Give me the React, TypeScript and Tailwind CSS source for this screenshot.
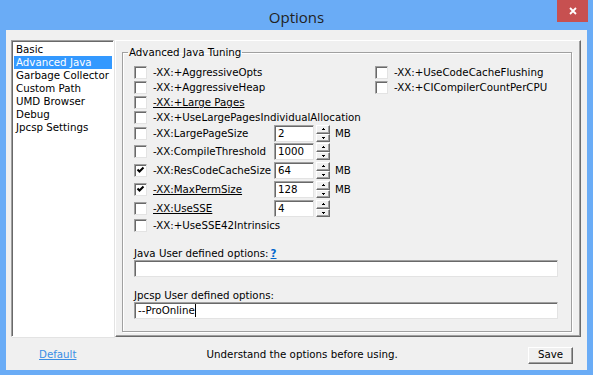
import React from 'react';

const sunken =
  'border border-t-[#a0a0a0] border-l-[#a0a0a0] border-b-[#e3e3e3] border-r-[#e3e3e3] shadow-[inset_1px_1px_0_#696969]';
const raised =
  'border border-t-white border-l-white border-b-[#696969] border-r-[#696969] shadow-[inset_-1px_-1px_0_#a0a0a0]';

function Check({ checked }: { checked?: boolean }) {
  return (
    <span className={`w-[13px] h-[13px] shrink-0 bg-white flex items-center justify-center ${sunken}`}>
      {checked && (
        <svg width="9" height="9" viewBox="0 0 9 9">
          <path d="M1.5 3.5 L3.5 5.5 L7.5 1.5" stroke="#000" strokeWidth="2" fill="none" />
        </svg>
      )}
    </span>
  );
}

function SpinBtn({ up }: { up?: boolean }) {
  return (
    <div className={`flex-1 w-[14px] bg-[#f0f0f0] flex items-center justify-center ${raised}`}>
      <svg width="3" height="2" viewBox="0 0 3 2">
        <path d={up ? 'M1 0h1v1h1v1H0V1h1z' : 'M0 0h3v1H2v1H1V1H0z'} fill="#000" />
      </svg>
    </div>
  );
}

function Spinner({ value, unit }: { value: string; unit?: string }) {
  return (
    <div className="flex items-center">
      <div className={`w-[40px] h-[17px] bg-white pl-[3px] leading-[15px] ${sunken}`}>{value}</div>
      <div className="ml-[2px] h-[17px] flex flex-col">
        <SpinBtn up />
        <SpinBtn />
      </div>
      {unit && <span className="ml-[5px]">{unit}</span>}
    </div>
  );
}

type Opt = { label: string; checked?: boolean; underline?: boolean; spin?: string; unit?: string; h: string };

const leftOpts: Opt[] = [
  { label: '-XX:+AggressiveOpts', h: 'h-[15px]' },
  { label: '-XX:+AggressiveHeap', h: 'h-[15px]' },
  { label: '-XX:+Large Pages', underline: true, h: 'h-[15px]' },
  { label: '-XX:+UseLargePagesIndividualAllocation', h: 'h-[15px]' },
  { label: '-XX:LargePageSize', spin: '2', unit: 'MB', h: 'h-[17px]' },
  { label: '-XX:CompileThreshold', spin: '1000', h: 'h-[19px]' },
  { label: '-XX:ResCodeCacheSize', checked: true, spin: '64', unit: 'MB', h: 'h-[19px]' },
  { label: '-XX:MaxPermSize', checked: true, underline: true, spin: '128', unit: 'MB', h: 'h-[19px]' },
  { label: '-XX:UseSSE', underline: true, spin: '4', h: 'h-[19px]' },
  { label: '-XX:+UseSSE42Intrinsics', h: 'h-[15px]' },
];

const rightOpts: Opt[] = [
  { label: '-XX:+UseCodeCacheFlushing', h: 'h-[15px]' },
  { label: '-XX:+CICompilerCountPerCPU', h: 'h-[15px]' },
];

function OptRow({ o }: { o: Opt }) {
  return (
    <div className={`flex items-center ${o.h}`}>
      <Check checked={o.checked} />
      <span className={`ml-[6px] whitespace-nowrap ${o.spin ? 'w-[121px]' : ''} ${o.underline ? 'underline' : ''}`}>
        {o.label}
      </span>
      {o.spin && <Spinner value={o.spin} unit={o.unit} />}
    </div>
  );
}

const sections = ['Basic', 'Advanced Java', 'Garbage Collector', 'Custom Path', 'UMD Browser', 'Debug', 'Jpcsp Settings'];

export default function App() {
  return (
    <div className="w-[593px] h-[375px] bg-[#6aacf6] flex flex-col font-['DejaVu_Sans',sans-serif] text-[10.25px] text-black">
      <div className="h-[30px] relative flex items-center justify-center pt-[5px]">
        <span className="font-['Open_Sans',sans-serif] text-[15px] text-[#222]">Options</span>
        <div className="absolute top-0 right-[5px] w-[31px] h-[22px] bg-[#c75050] flex items-center justify-center">
          <svg width="8" height="8" viewBox="0 0 8 8">
            <path d="M1 1 L7 7 M7 1 L1 7" stroke="#fff" strokeWidth="1.8" />
          </svg>
        </div>
      </div>

      <div className="mx-[6px] mb-[5px] flex-1 bg-[#f0f0f0] flex flex-col">
        <div className="h-[307px] flex pt-[10px] pl-[5px] pr-[6px]">
          <div className={`w-[103px] h-full bg-white border border-t-[#a0a0a0] border-l-[#a0a0a0] border-b-white border-r-white shadow-[inset_1px_1px_0_#696969,1px_1px_0_#e3e3e3] pt-[2px] pl-[2px] pr-[1px]`}>
            {sections.map((s) => (
              <div
                key={s}
                className={`h-[13px] leading-[13px] pl-[2px] whitespace-nowrap ${s === 'Advanced Java' ? 'bg-[#3399ff] text-white' : ''}`}
              >
                {s}
              </div>
            ))}
          </div>

          <div className={`ml-[1px] flex-1 h-full pt-[5px] pl-[6px] pr-[8px] pb-[4px] ${raised}`}>
            <fieldset className="h-full border border-[#a0a0a0] shadow-[inset_1px_1px_0_#fff,1px_1px_0_#fff]">
              <legend className="ml-[5px] px-[1px] leading-[13px]">Advanced Java Tuning</legend>
              <div className="pt-[6px] pl-[11px] pr-[13px]">
                <div className="flex">
                  <div className="w-[241px] flex flex-col">
                    {leftOpts.map((o) => (
                      <OptRow key={o.label} o={o} />
                    ))}
                  </div>
                  <div className="flex flex-col">
                    {rightOpts.map((o) => (
                      <OptRow key={o.label} o={o} />
                    ))}
                  </div>
                </div>

                <div className="mt-[14px] leading-[13px]">
                  Java User defined options:<span className="ml-[2px] font-bold text-[#0066cc] underline">?</span>
                </div>
                <div className={`h-[17px] bg-white ${sunken}`} />

                <div className="mt-[12px] leading-[13px]">Jpcsp User defined options:</div>
                <div className={`h-[17px] bg-white pl-[3px] leading-[15px] flex items-center ${sunken}`}>
                  --ProOnline
                  <span className="w-[1px] h-[13px] bg-black" />
                </div>
              </div>
            </fieldset>
          </div>
        </div>

        <div className="flex-1 flex items-center pt-[3px] pl-[33px] pr-[14px]">
          <span className="text-[#3a8ee6] underline">Default</span>
          <span className="flex-1 text-center">Understand the options before using.</span>
          <div className={`w-[45px] h-[17px] bg-[#f0f0f0] flex items-center justify-center ${raised}`}>Save</div>
        </div>
      </div>
    </div>
  );
}
